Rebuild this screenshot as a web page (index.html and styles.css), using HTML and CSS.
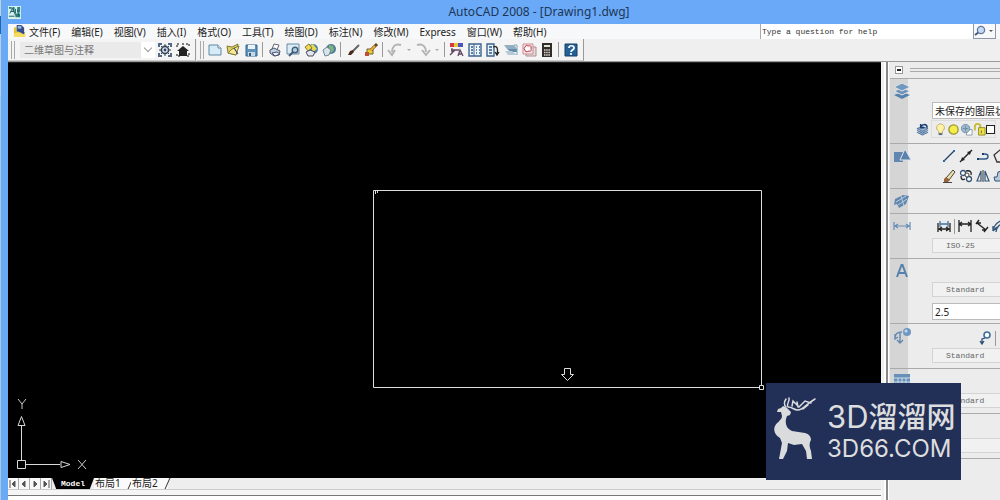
FILE: index.html
```html
<!DOCTYPE html>
<html lang="zh-CN">
<head>
<meta charset="utf-8">
<title>AutoCAD 2008 - [Drawing1.dwg]</title>
<link rel="stylesheet" href="styles.css">
</head>
<body>
<div class="window">
  <header class="titlebar">
    <svg class="app-icon" viewBox="0 0 14 14"><path fill="#d9f1ec" d="M0 0h14v14H0z"/><path fill="#287f7c" d="M1 1h3v2H1zM5 1h2v5H5zM10 1h3v6h-3zM8 8h5v4H8z"/><path d="M2 8l3-6 3 8M3 6h4M8 3v5M10 4l2 7M1 11h6" stroke="#145b5c" fill="none"/></svg>
    <h1>AutoCAD 2008 - [Drawing1.dwg]</h1>
  </header>
  <nav class="menubar">
    <svg class="doc-icon" viewBox="0 0 14 14"><path fill="#e5c42e" d="M1 3l3-1v5l9 1v5H1z"/><path fill="#3a4c80" d="M4 0h5l3 3v5L4 7z"/><path fill="#8fb4e0" d="M5 1h4v3H5z"/><path fill="#f3dd63" d="M1 9l4-1 8 2v3H1z"/><path d="M5 5l7 4" stroke="#284d9b" stroke-width="2"/></svg>
    <button>文件(F)</button><button>编辑(E)</button><button>视图(V)</button><button>插入(I)</button><button>格式(O)</button><button>工具(T)</button><button>绘图(D)</button><button>标注(N)</button><button>修改(M)</button><button>Express</button><button>窗口(W)</button><button>帮助(H)</button>
    <div class="help-search">
      <input type="text" aria-label="Help search" placeholder="Type a question for help">
      <button class="find" aria-label="Search"><svg width="20" height="12" viewBox="0 0 20 12"><path d="M5 7L1 10" stroke="#4d5872" stroke-width="2"/><circle cx="7" cy="5" r="3.6" fill="#c6dcf4" stroke="#61769d" stroke-width="1.3"/><path d="M15 5h4l-2 2z" fill="#555"/></svg></button>
      <button class="more" aria-label="More"></button>
    </div>
  </nav>
  <div class="toolbars">
    <div class="toolbar workspace">
      <span class="grip"></span>
      <select aria-label="工作空间"><option>二维草图与注释</option></select>
      <button aria-label="工作空间设置"><svg viewBox="0 0 16 16"><path d="M2 5V2h3M11 2h3v3M14 11v3h-3M5 14H2v-3" fill="none" stroke="#526986" stroke-width="2"/><circle cx="8" cy="8" r="3.6" fill="#dce6ef" stroke="#33455b" stroke-width="1.6"/><path d="M8 2v3M8 11v3M2 8h3M11 8h3M4 4l2 2M10 10l2 2M12 4l-2 2M6 10l-2 2" stroke="#33455b"/><circle cx="8" cy="8" r="1.4" fill="#33455b"/></svg></button>
      <button aria-label="我的工作空间"><svg viewBox="0 0 16 16"><path d="M2 5V2h3M11 2h3v3M14 11v3h-3M5 14H2v-3M7 2h2" fill="none" stroke="#555" stroke-width="1.5" stroke-dasharray="2 1"/><path d="M2 9l6-5 6 5h-2v5H4V9z" fill="#222"/></svg></button>
    </div>
    <div class="toolbar standard">
      <span class="grip"></span>
      <button aria-label="新建"><svg viewBox="0 0 16 16"><path d="M2 3h9l3 3v7H2z" fill="#d6ebf6" stroke="#5e87a5"/><path d="M11 3v3h3" fill="#fff" stroke="#5e87a5"/></svg></button>
      <button aria-label="打开"><svg viewBox="0 0 16 16"><path d="M2 4l5 1 6-3-2 11-8-2z" fill="#e1d064" stroke="#807b37"/><path d="M7 7l7-3-3 9-8-2z" fill="#f6e997" stroke="#807b37"/><path d="M9 6l4 6" stroke="#446" stroke-width="1.2"/></svg></button>
      <button aria-label="保存"><svg viewBox="0 0 16 16"><path d="M3 3h11v11H3z" fill="#5f93bd" stroke="#33648e"/><path d="M5 3h7v4H5z" fill="#e9f3f9"/><path d="M5 10h7v4H5z" fill="#c6d8e5"/><path d="M6 11h2v3H6z" fill="#345d80"/></svg></button>
      <span class="sep"></span>
      <button aria-label="打印"><svg viewBox="0 0 16 16"><path d="M5 7l2-5 5 1-2 5" fill="#fff" stroke="#667"/><path d="M3 8l4-2 6 3-1 4-5 1-4-3z" fill="#c3cfdf" stroke="#47536d"/><path d="M5 11l5-1 3 2-5 2z" fill="#eef" stroke="#47536d"/></svg></button>
      <button aria-label="打印预览"><svg viewBox="0 0 16 16"><path d="M2 2h12v10H2z" fill="#dcecf5" stroke="#628aa7"/><circle cx="10" cy="8" r="2.800" fill="#afd2e7" stroke="#445b76" stroke-width="1.4"/><path d="M8 10l-4 4" stroke="#445b76" stroke-width="2"/></svg></button>
      <button aria-label="发布"><svg viewBox="0 0 16 16"><circle cx="10" cy="7" r="5" fill="#477dac"/><path d="M7 4l3-2 4 5-4 3z" fill="#e7d855"/><path d="M2 5l4-3 3 4-4 3z" fill="#f0d956" stroke="#83792d"/><path d="M3 10l4-2 5 2-2 4H5z" fill="#e4e5ee" stroke="#444e66"/></svg></button>
      <button aria-label="三维 DWF"><svg viewBox="0 0 16 16"><circle cx="10" cy="7" r="5" fill="#527c9b"/><path d="M8 3l4 1 1 4-3 3-2-4z" fill="#7eb57b"/><path d="M2 8l4-3 4 3-2 5-4 1z" fill="#dae3e8" stroke="#69889a"/></svg></button>
      <span class="sep"></span>
      <button aria-label="特性匹配"><svg viewBox="0 0 16 16"><path d="M14 3L8 9" stroke="#666" stroke-width="2"/><path d="M3 13l2-4 3-1 1 2-3 3z" fill="#49291b"/></svg></button>
      <button aria-label="块编辑器"><svg viewBox="0 0 16 16"><path d="M4 7h6v5H4z" fill="#e9d32f" stroke="#6b602d"/><path d="M14 2L8 8" stroke="#63451d" stroke-width="3"/><path d="M12 4l-5 5" stroke="#ebac38" stroke-width="2"/><path d="M2 14v-4h4v4z" fill="#c05035"/></svg></button>
      <span class="sep"></span>
      <button aria-label="放弃" disabled><svg viewBox="0 0 16 16"><path d="M14 3C8 1 5 5 5 10M1 8l4 5 3-5" fill="none" stroke="#b3b3b3" stroke-width="2"/></svg></button>
      <span class="caret"></span>
      <button aria-label="重做" disabled><svg viewBox="0 0 16 16"><path d="M2 3c6-2 9 2 9 7M7 8l4 5 4-5" fill="none" stroke="#b3b3b3" stroke-width="2"/></svg></button>
      <span class="caret"></span>
      <span class="sep"></span>
      <button aria-label="特性"><svg viewBox="0 0 16 16"><path d="M1 1h4v4H1z" fill="#d63740"/><path d="M5 1h4v4H5z" fill="#e8c93e"/><path d="M9 1h5v4H9z" fill="#4d55bb"/><path d="M2 8h8M3 6v5M1 13l5-5M9 14l2-6 3 6M10 12h3" stroke="#624762" fill="none" stroke-width="1.3"/></svg></button>
      <button aria-label="设计中心"><svg viewBox="0 0 16 16"><path d="M2 2h12v12H2z" fill="#eaf3f8" stroke="#3d638e" stroke-width="1.4"/><path d="M7 2v12" stroke="#3d638e"/><path d="M4 5h2M4 8h2M4 11h2M9 5h1M12 5h1M9 8h1M12 8h1M9 11h1M12 11h1" stroke="#315a86" stroke-width="1.5"/></svg></button>
      <button aria-label="工具选项板"><svg viewBox="0 0 16 16"><path d="M2 2h7v12H2z" fill="#eaf3f8" stroke="#3d638e" stroke-width="1.4"/><path d="M4 5h3M4 8h3M4 11h3" stroke="#315a86" stroke-width="1.500"/><path d="M8 5c5-2 5 3 4 7M10 10l2 3 2-3" fill="none" stroke="#222" stroke-width="1.3"/></svg></button>
      <button aria-label="图纸集"><svg viewBox="0 0 16 16"><path d="M1 3h10l3 4H4z" fill="#91adc0"/><path d="M4 7h10v3H8z" fill="#628ca8"/><path d="M2 9h7l5 4H5z" fill="#b4cad8"/><path d="M11 3h3v10" fill="none" stroke="#80a2b8"/></svg></button>
      <button aria-label="标记集"><svg viewBox="0 0 16 16"><path d="M5 5h10v9H5z" fill="#ddd" stroke="#b58a90"/><path d="M2 2h10v10H2z" fill="#f4eaea" stroke="#c98b92"/><path d="M4 5q1-3 3-1 4-1 3 2 1 4-2 3-4 2-4-1-2-1 0-3z" fill="#fff" stroke="#c83344"/></svg></button>
      <button aria-label="计算器"><svg viewBox="0 0 16 16"><path d="M3 1h10v14H3z" fill="#302d2c"/><path d="M5 3h6v2H5z" fill="#e0e5cc"/><path d="M5 8h6M5 10.5h6M5 13h6" stroke="#e3d7cd" stroke-width="1.3" stroke-dasharray="1.5 .7"/></svg></button>
      <span class="sep"></span>
      <button aria-label="帮助"><svg viewBox="0 0 16 16"><path d="M2 2h12v12H2z" fill="#236197" stroke="#173e66"/><path d="M6 6c0-3 5-3 5 0 0 2-3 2-3 4M8 11v2" fill="none" stroke="#fff" stroke-width="1.7"/></svg></button>
    </div>
  </div>
  <div class="workarea">
    <main class="drawing">
      <svg class="sheet" aria-label="模型空间">
        <path d="M365.500 127.500h388v197h-388zM367.500 128v3M369.500 128v2" fill="none" stroke="#dedede"/>
        <path d="M751.500 322.500h4v4h-4z" fill="#000" stroke="#ddd"/>
        <path d="M556.500 305.500h6v6h3l-6 6-6-6h3z" fill="#000" stroke="#ddd"/>
        <path d="M9.500 397.500h8v8h-8zM13.500 397V363M18 401.500h34M10 362.500l3.500-9 3.500 9zM53 398.500l9 3-9 3z" fill="none" stroke="#d9d9d9"/>
        <path d="M10 336l4 5 4-5M14 341v5M70 397l8 9M78 397l-8 9" fill="none" stroke="#ccc"/>
      </svg>
    </main>
    <div class="tabs">
      <button class="nav-btn" aria-label="第一个"><svg viewBox="0 0 10 10"><path d="M2 1v8M7 2v6L4 5z"/></svg></button>
      <button class="nav-btn" aria-label="上一个"><svg viewBox="0 0 10 10"><path d="M6 2v6L3 5z"/></svg></button>
      <button class="nav-btn" aria-label="下一个"><svg viewBox="0 0 10 10"><path d="M4 2v6l3-3z"/></svg></button>
      <button class="nav-btn" aria-label="最后一个"><svg viewBox="0 0 10 10"><path d="M8 1v8M3 2v6l3-3z"/></svg></button>
      <button class="tab active">Model</button>
      <button class="tab">布局1</button>
      <button class="tab">布局2</button>
    </div>
    <div class="command"></div>
  </div>
  <aside class="dashboard">
    <div class="dash-head"><button aria-label="折叠"></button><span class="dash-grip"></span></div>
    <section class="tall layers">
      <div class="mark"><svg viewBox="0 0 18 18"><path d="M1 13l8 4 8-4-8-3z" fill="#5880ac"/><path d="M1 9l8 4 8-4-8-3z" fill="#6c92b9" stroke="#e0e4e8"/><path d="M1 5l8 4 8-4-8-4z" fill="#7197bf" stroke="#e0e4e8"/></svg></div>
      <div class="body">
        <select class="live" aria-label="图层状态"><option>未保存的图层状态</option></select>
        <div class="layer-row">
          <svg viewBox="0 0 14 14"><path d="M1 10l6 3 6-3M1 8l6 3 6-3M1 6l6 3 6-3-6-2z" fill="#9eb4cc" stroke="#456d98"/><path d="M12 5c0-5-5-4-7-1M5 1v4h4" fill="none" stroke="#173f76" stroke-width="1.6"/></svg>
          <div class="layer-box">
          <svg viewBox="0 0 14 14"><path d="M5 9C1 6 3 1 7 1s6 5 2 8v2H5z" fill="#fff2a0" stroke="#bca870"/><path d="M5 12h4" stroke="#536b85" stroke-width="2"/></svg>
          <svg viewBox="0 0 14 14"><circle cx="7" cy="7" r="5" fill="#f3ee4a" stroke="#999335" stroke-width="1.4"/></svg>
          <svg viewBox="0 0 14 14"><path d="M7 7h6v6H7z" fill="#fff" stroke="#8b99a7"/><circle cx="6" cy="6" r="4.500" fill="#a0bace" stroke="#708fa8"/><path d="M3 6h6M6 3v6" stroke="#6d8ca7"/></svg>
          <svg viewBox="0 0 14 14"><path d="M2 8V4c0-4 6-4 6 0v3" fill="none" stroke="#c5bb36" stroke-width="2"/><path d="M6 5h7v8H6z" fill="#f0e341" stroke="#908929"/><path d="M9 8v3" stroke="#665"/></svg>
          <span class="swatch"></span>
          </div>
        </div>
      </div>
    </section>
    <section class="mid draw">
      <div class="mark"><svg viewBox="0 0 18 18"><path d="M1 5h9v10H1z" fill="#6187b0"/><path d="M12 2l6 11H7z" fill="#5b82ae" stroke="#dce2e8"/></svg></div>
      <div class="body">
        <div class="tools">
          <svg viewBox="0 0 14 14"><path d="M2 12L12 2" stroke="#233f63" stroke-width="1.3"/><path d="M1 11h2v2H1zM11 1h2v2h-2z" fill="#316a9e"/></svg>
          <svg viewBox="0 0 14 14"><path d="M1 13L13 1" stroke="#222" stroke-width="1.4"/><path d="M2 12l1-4 3 3zM12 2l-1 4-3-3z" fill="#222"/></svg>
          <svg viewBox="0 0 14 14"><path d="M1 10h8c4 0 4-5 0-5H7" fill="none" stroke="#315c87" stroke-width="1.4"/><path d="M1 9h2v2H1zM6 4h2v2H6z" fill="#183e68"/></svg>
          <svg viewBox="0 0 14 14"><path d="M1 6l6-5 6 5-3 7H4z" fill="none" stroke="#333" stroke-width="1.3"/></svg>
        </div>
        <div class="tools">
          <svg viewBox="0 0 14 14"><path d="M4 9l7-8 2 2-6 8z" fill="#eee0a7" stroke="#444"/><path d="M2 10l2-2 4 3-2 2H2z" fill="#99633b"/><path d="M1 13.500h9" stroke="#444"/></svg>
          <svg viewBox="0 0 14 14"><circle cx="4" cy="4" r="2.500" fill="#fff" stroke="#345579" stroke-width="1.3"/><circle cx="10" cy="10" r="2.500" fill="#fff" stroke="#345579" stroke-width="1.3"/><path d="M7 2c4-1 6 1 5 4M2 7c0 4 2 4 4 3" fill="none" stroke="#222" stroke-width="1.3"/><circle cx="8" cy="6" r="2" fill="#fff" stroke="#444"/></svg>
          <svg viewBox="0 0 14 14"><path d="M5 2v10H1zM9 2v10h4z" fill="none" stroke="#35577a" stroke-width="1.2"/><path d="M7 1v12" stroke="#333"/></svg>
          <svg viewBox="0 0 14 14"><path d="M2 12h9l2-5-4-5-4 1-1 5H1z" fill="#b9cad9" stroke="#345579"/></svg>
        </div>
      </div>
    </section>
    <section class="short navigate">
      <div class="mark"><svg viewBox="0 0 18 18"><path d="M2 7l8-4 6 1-3 8-7 4-2-4-3 1z" fill="#6388b0"/><path d="M3 10l10-6M5 13l9-6M8 4l3 10" stroke="#b9cbdc" fill="none"/></svg></div>
    </section>
    <section class="mid dims">
      <div class="mark"><svg viewBox="0 0 18 18"><path d="M1 5v8M17 5v8M2 9h14M5 7L2 9l3 2M13 7l3 2-3 2" fill="none" stroke="#668db4" stroke-width="1.2"/></svg></div>
      <div class="body">
        <div class="tools dim-tools">
          <svg viewBox="0 0 14 14"><path d="M1 4v9M13 4v9M2 10h10M5 8l-3 2 3 2M9 8l3 2-3 2" fill="none" stroke="#222" stroke-width="1.3"/><path d="M3 5h8M3 2v6M11 2v6" fill="none" stroke="#3d729e" stroke-width="1.3"/></svg>
          <span class="sep"></span>
          <svg viewBox="0 0 14 14"><path d="M1 1v12M13 1v12M1 5h12M4 3L1 5l3 2M10 3l3 2-3 2" fill="none" stroke="#222" stroke-width="1.3"/></svg>
          <svg viewBox="0 0 14 14"><path d="M2 4l9 7M1 5l3-4M9 13l4-5M2 4h4M11 11H7" fill="none" stroke="#222" stroke-width="1.4"/></svg>
          <svg viewBox="0 0 14 14"><path d="M1 12C2 6 6 2 12 1M4 13c0-5 4-8 8-8M1 12l4-4M1 12V7" fill="none" stroke="#35577a" stroke-width="1.4"/></svg>
        </div>
        <select class="off" aria-label="标注样式" disabled><option>ISO-25</option></select>
      </div>
    </section>
    <section class="tall texts">
      <div class="mark"><svg viewBox="0 0 18 18"><path d="M4 15L8.500 3h1L14 15M6 11h6" fill="none" stroke="#5781ad" stroke-width="2"/></svg></div>
      <div class="body">
        <select class="off" aria-label="文字样式" disabled><option>Standard</option></select>
        <input class="live" type="text" aria-label="文字高度" value="2.5">
      </div>
    </section>
    <section class="mid leaders">
      <div class="mark"><svg viewBox="0 0 18 18"><path d="M2 11C2 7 5 5 9 5M7 5v10M2 7v5l3-2M4 13l3 3 3-3" fill="none" stroke="#6389b1" stroke-width="1.4"/><circle cx="14" cy="5" r="4" fill="#6f98c1"/><circle cx="13" cy="4" r="1.500" fill="#c4d9ea"/></svg></div>
      <div class="body">
        <div class="tools leader-tools"><svg viewBox="0 0 14 14"><circle cx="9" cy="4" r="3" fill="#fff" stroke="#3c6d9b" stroke-width="1.6"/><path d="M7 7l-3 1v4M2 10l2 3 2-3" fill="none" stroke="#284d74" stroke-width="1.3"/></svg><span class="sep"></span></div>
        <select class="off" aria-label="引线样式" disabled><option>Standard</option></select>
      </div>
    </section>
    <section class="mid tables">
      <div class="mark"><svg viewBox="0 0 18 18"><path d="M1 2h16v13H1z" fill="#6690b7"/><path d="M1 6h16M1 10h16M5 6v9M9 6v9M13 6v9" stroke="#cfdeea"/></svg></div>
      <div class="body"><select class="off" aria-label="表格样式" disabled><option>Standard</option></select></div>
    </section>
    <section class="mid">
      <div class="mark"></div>
      <div class="body"><select class="off" aria-label="视图" disabled><option></option></select></div>
    </section>
    <section class="rest"></section>
  </aside>
</div>
<div class="watermark">
  <svg class="deer" viewBox="0 0 56 70"><path fill="#dadbdd" d="M9 17l1-3 3-1 2-2 4 2 4 4-1 3-3 1-1 3c-1 5 1 10 6 12l13 2c4 1 6 4 6 7l-1 2c-1 4 0 6 1 9l1 8h-5l-1-8-4-7-8 1-6-2-1 8-4 8h-4l3-16-2-5c-5-3-7-8-5-12 2-4 7-6 7-10l-1-4z"/><path fill="none" stroke="#dadbdd" stroke-width="1.500" stroke-linecap="round" d="M18 12c-2-2-2-5 0-8M20 12c-2-4 2-5 1-9M20 12c5 0 5 3 10 3s7-5 17-11M24 11l1-5 5 5M31 12l6-6 6 2M35 14l5-4M30 12l-1-5"/></svg>
  <div class="brand"><div class="brand-name"><span>3D</span>溜溜网</div><div class="brand-url">3D66.COM</div></div>
</div>
</body>
</html>
```
FILE: styles.css
```css
* { box-sizing: border-box; }
body { margin: 0; height: 100vh; overflow: hidden; background: linear-gradient(#bcd4d2 0 16px, #1f67a9 16px 34px, #b5d0e4 34px 96px, #a9c8e8 96px); font: 10px/14px "Noto Sans", "Noto Sans CJK SC", sans-serif; color: #222; }
button, input, select { margin: 0; padding: 0; border: 0; border-radius: 0; background: none; font: inherit; color: inherit; appearance: none; }
svg { display: block; flex: none; }
.window { height: 100vh; margin-left: 1px; display: grid; grid-template: 24px 15px 23px 1fr / 1fr 118px; border-left: 7px solid #69a9f6; background: #efefef; }
.titlebar { grid-column: 1 / -1; display: flex; align-items: center; background: #69a9f7; padding-right: 8px; }
.app-icon { width: 13px; height: 13px; }
h1 { flex: 1; margin: 0; text-align: center; font: 12px/22px "Noto Sans", sans-serif; color: #1d3655; padding-left: 65px; }
.menubar { grid-column: 1 / -1; display: flex; align-items: center; background: #f7f8f9; gap: 11px; padding-left: 5px; overflow: hidden; }
.menubar > button { white-space: nowrap; }
.doc-icon { width: 13px; height: 13px; margin-right: -8px; }
.help-search { display: flex; align-self: stretch; margin-left: auto; width: 240px; }
.help-search input { flex: 1; min-width: 0; background: #fff; border-left: 1px solid #aaa; padding-left: 1px; font: 8px/14px "Liberation Mono", monospace; }
.help-search input::placeholder { color: #333; opacity: 1; }
.find { width: 23px; border: 1px solid #8d97a8; border-top: 0; }
.more { width: 4px; }
.toolbars { grid-column: 1 / -1; display: flex; background: #efefef; border-bottom: 1px solid #999; overflow: hidden; }
.toolbar { display: flex; align-items: center; border-right: 1px solid #999; border-bottom: 1px solid #ccc; background: #f4f4f4; }
.toolbar svg { width: 16px; height: 16px; }
.toolbar button { display: flex; justify-content: center; width: 18px; flex: none; }
.grip { width: 4px; height: 18px; border: solid #aaa; border-width: 0 1px; margin: 0 2px 0 3px; }
.workspace { width: 188px; margin-right: 1px; }
.workspace select { width: 135px; height: 16px; padding-left: 4px; color: #777; background: #eaeaea linear-gradient(#fff, #fff) right / 14px 100% no-repeat; }
.workspace .grip { margin-right: 5px; }
.workspace::before { content: ""; order: 1; width: 5px; height: 5px; border: solid #999; border-width: 0 1px 1px 0; transform: rotate(45deg); margin: 0 5px 3px -10px; z-index: 1; }
.workspace button { order: 2; }
.standard { padding-right: 3px; }
.sep { width: 1px; height: 15px; background: #999; margin: 0 3px 0 2px; flex: none; }
.caret { border: 2px solid transparent; border-top-color: #aaa; margin: 2px 3px 0; }
.workarea { display: flex; flex-direction: column; min-width: 0; border-right: 1px solid #f6f6f6; }
.drawing { flex: 1; min-height: 0; background: #000; border-top: 1px solid #222; }
.sheet { width: 100%; height: 100%; }
.tabs { display: flex; height: 12px; background: #eee; border-bottom: 1px solid #ccc; }
.nav-btn { width: 11px; border-right: 1px solid #aaa; background: #f8f8f8; }
.nav-btn svg { width: 10px; height: 10px; fill: #555; stroke: #555; stroke-width: 1; }
.tab { position: relative; width: 37px; background: #fafafa; line-height: 11px; padding-left: 1px; text-align: left; }
.tab::after { content: ""; position: absolute; right: 0; top: 0; width: 1px; height: 11px; background: #333; transform: skewX(-24deg); }
.tab.active { width: 42px; padding: 0; text-align: center; background: #000; color: #fff; font: bold 8px/11px "Liberation Mono", monospace; clip-path: polygon(0 0, 100% 0, 90% 100%, 10% 100%); }
.command { height: 10px; border-top: 5px solid #f5f5f5; background: #fff; box-shadow: inset 0 1px #777; }
.dashboard { overflow: hidden; border-left: 2px solid #888; margin-left: 4px; padding-left: 2px; background: #ececec; box-shadow: -2px 0 #fff, inset 1px 0 #fff; }
.dash-head { height: 16px; display: flex; align-items: center; gap: 7px; padding-left: 5px; }
.dash-head button { width: 8px; height: 8px; border: 1px solid #999; background: linear-gradient(#222, #222) center / 4px 2px no-repeat #fff; }
.dash-grip { flex: 1; height: 4px; border: solid #aaa; border-width: 1px 0; }
section { display: grid; grid-template-columns: 18px 1fr; border-top: 1px solid #aaa; }
.tall { height: 65px; }
.mid { height: 45px; }
.short { height: 25px; }
.mark { background: #d5d5d5; padding-top: 3px; }
.mark svg { width: 20px; height: 18px; margin-left: 2px; }
.body { min-width: 0; display: flex; flex-direction: column; justify-content: flex-end; padding-left: 24px; overflow: hidden; }
.live, .off { width: 90px; height: 17px; flex: none; border: 1px solid #bbb; padding-left: 2px; background: #fff; }
.off { height: 15px; border-color: #d4d4d4; background: #f1f1f1; color: #666; opacity: 1; padding-left: 13px; font: 8px/12px "Liberation Mono", monospace; margin-bottom: 5px; }
.layer-row { display: flex; align-items: center; height: 20px; margin: 0 0 4px -16px; gap: 2px; }
.layer-row svg { width: 13px; height: 13px; }
.layer-box { display: flex; align-items: center; border: 1px solid #ddd; padding-left: 2px; height: 18px; flex: none; }
.swatch { width: 9px; height: 9px; border: 1px solid #222; background: #fff; }
.tools { display: flex; gap: 3px; height: 20px; align-items: center; padding-left: 10px; }
.tools svg { width: 14px; height: 14px; }
.draw .body { justify-content: center; }
.dim-tools { padding-left: 5px; gap: 3px; margin-bottom: 2px; }
.dim-tools .sep, .leader-tools .sep { margin: 0; }
.texts .body { gap: 1px; padding-bottom: 3px; }
.leader-tools { padding-left: 46px; }
.watermark { position: absolute; right: 39px; bottom: 20px; display: flex; align-items: center; gap: 3px; padding: 12px 6px 15px 2px; background: #222f56; color: #dcdddf; }
.deer { width: 56px; height: 70px; }
.brand { font-family: Inter, "Noto Sans CJK SC", sans-serif; white-space: nowrap; width: 128px; }
.brand-name { font-size: 29px; line-height: 36px; font-weight: 500; }
.brand-name span { font-size: 31px; font-weight: 400; }
.brand-url { font-size: 24px; line-height: 26px; }
```
